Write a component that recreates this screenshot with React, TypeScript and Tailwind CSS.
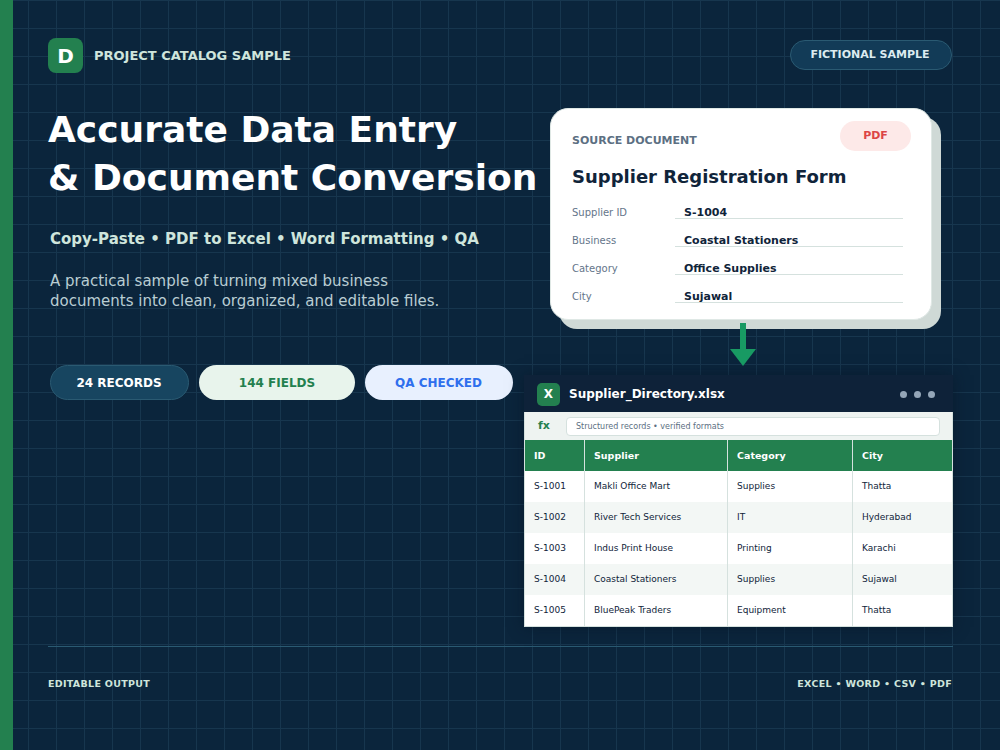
const font = '[font-family:"DejaVu_Sans",sans-serif]'

const stats = [
  { label: '24 RECORDS', className: 'w-[139px] border border-[#2a5a72] bg-[#174560] pr-[1px] text-white' },
  { label: '144 FIELDS', className: 'w-[156px] bg-[#e8f4ec] text-[#23804f]' },
  { label: 'QA CHECKED', className: 'w-[148px] bg-[#e8f0fe] pr-[1px] text-[#2f6fed]' },
]

const fields = [
  ['Supplier ID', 'S-1004'],
  ['Business', 'Coastal Stationers'],
  ['Category', 'Office Supplies'],
  ['City', 'Sujawal'],
]

const rows = [
  ['S-1001', 'Makli Office Mart', 'Supplies', 'Thatta'],
  ['S-1002', 'River Tech Services', 'IT', 'Hyderabad'],
  ['S-1003', 'Indus Print House', 'Printing', 'Karachi'],
  ['S-1004', 'Coastal Stationers', 'Supplies', 'Sujawal'],
  ['S-1005', 'BluePeak Traders', 'Equipment', 'Thatta'],
]

const columns = 'grid grid-cols-[60px_143px_125px_99px]'

function SourceCard() {
  return (
    <div className="ml-[26px] h-[212px] w-[382px] rounded-[18px] border border-[#dfe8e5] bg-white pl-[21px] pr-[20px] pt-[12px] shadow-[9px_9px_0_#cfd9d6]">
      <div className="flex items-start justify-between">
        <p className="pt-[12px] text-[11px] font-bold leading-[16px] text-[#5c6f82]">SOURCE DOCUMENT</p>
        <span className="flex h-[30px] w-[71px] items-center justify-center rounded-full bg-[#fde9e8] text-[11px] font-bold text-[#dc4545]">PDF</span>
      </div>
      <h2 className="mt-[14px] text-[18px] font-bold leading-[24px] text-[#10243a]">Supplier Registration Form</h2>
      <div className="mr-[8px] mt-[2px]">
        {fields.map(([label, value]) => (
          <div key={label} className="grid h-[28px] grid-cols-[103px_1fr] items-end">
            <span className="pb-[1px] text-[10px] leading-[10px] text-[#64758a]">{label}</span>
            <span className="border-b border-[#d5e1de] pl-[9px] text-[11px] font-bold leading-[10px] text-[#10243a]">{value}</span>
          </div>
        ))}
      </div>
    </div>
  )
}

function Sheet() {
  return (
    <div className="w-[429px] shadow-[0_0_14px_rgba(6,22,38,0.6)]">
      <div className="flex h-[37px] items-center justify-between bg-[#0e2239] pl-[13px] pr-[18px] pt-[1px]">
        <div className="flex items-center gap-[9px]">
          <span className="flex h-[23px] w-[23px] items-center justify-center rounded-[5px] bg-[#23804f] text-[12px] font-bold text-white">X</span>
          <span className="text-[12px] font-bold text-white">Supplier_Directory.xlsx</span>
        </div>
        <div className="flex gap-[7px]">
          <span className="h-[7px] w-[7px] rounded-full bg-[#94a6b8]" />
          <span className="h-[7px] w-[7px] rounded-full bg-[#94a6b8]" />
          <span className="h-[7px] w-[7px] rounded-full bg-[#94a6b8]" />
        </div>
      </div>
      <div className="border-x border-b border-[#d5e1de] bg-white">
        <div className="flex h-[28px] items-center bg-[#eef3f1] pl-[13px] pr-[12px] pt-[1px]">
          <span className="w-[28px] text-[11px] font-bold text-[#23804f]">fx</span>
          <span className="flex h-[19px] flex-1 items-center rounded-[4px] border border-[#d5e1de] bg-white pl-[9px] text-[8px] text-[#5c6f82]">
            Structured records • verified formats
          </span>
        </div>
        <div className={`${columns} h-[31px] bg-[#23804f]`}>
          {['ID', 'Supplier', 'Category', 'City'].map((h, i) => (
            <span key={h} className={`flex items-center pl-[9px] pt-[1px] text-[9.5px] font-bold text-white ${i < 3 ? 'border-r border-[#d5e1de]' : ''}`}>{h}</span>
          ))}
        </div>
        {rows.map((row, r) => (
          <div key={row[0]} className={`${columns} h-[31px] ${r % 2 ? 'bg-[#f3f7f5]' : 'bg-white'}`}>
            {row.map((cell, i) => (
              <span key={i} className={`flex items-center pl-[9px] text-[9px] text-[#10243a] ${i < 3 ? 'border-r border-[#d5e1de]' : ''}`}>{cell}</span>
            ))}
          </div>
        ))}
      </div>
    </div>
  )
}

export default function App() {
  return (
    <div className={`${font} flex h-[750px] w-[1000px] overflow-hidden bg-[#0b253c] bg-[linear-gradient(#17364e_1px,transparent_1px),linear-gradient(90deg,#17364e_1px,transparent_1px)] bg-[size:28px_28px]`}>
      <div className="w-[13px] bg-[#23804f]" />
      <div className="w-[940px] pl-[35px]">
        <header className="flex h-[108px] items-start justify-between pt-[38px]">
          <div className="flex items-center gap-[11px]">
            <span className="flex h-[35px] w-[35px] items-center justify-center rounded-[8px] bg-[#23804f] text-[20px] font-bold text-white">D</span>
            <span className="text-[13px] font-bold text-[#cfe5dc]">PROJECT CATALOG SAMPLE</span>
          </div>
          <span className="mr-[1px] mt-[2px] flex h-[30px] w-[162px] items-center justify-center rounded-full border border-[#2a5a72] bg-[#123b57] pr-[2px] text-[11px] font-bold text-[#dcebf0]">FICTIONAL SAMPLE</span>
        </header>
        <div className="flex">
          <div className="w-[476px] shrink-0">
            <h1 className="-mt-[2px] whitespace-nowrap text-[36px] font-bold leading-[48px] text-white">Accurate Data Entry<br />&amp; Document Conversion</h1>
            <p className="ml-[2px] mt-[27px] whitespace-nowrap text-[15px] font-bold leading-[20px] text-[#cfe5dc]">Copy-Paste • PDF to Excel • Word Formatting • QA</p>
            <p className="ml-[2px] mt-[22px] whitespace-nowrap text-[15px] leading-[20px] text-[#b9cdd3]">A practical sample of turning mixed business<br />documents into clean, organized, and editable files.</p>
            <div className="ml-[2px] mt-[54px] flex gap-[10px]">
              {stats.map((s) => (
                <span key={s.label} className={`flex h-[35px] shrink-0 items-center justify-center rounded-full text-[12px] font-bold ${s.className}`}>{s.label}</span>
              ))}
            </div>
          </div>
          <div className="w-[429px] shrink-0">
            <SourceCard />
            <div className="ml-[206px] flex flex-col items-start">
              <svg width="26" height="43" viewBox="0 0 26 43" className="mt-[3px]">
                <rect x="10" y="0" width="6" height="29" fill="#189a63" />
                <polygon points="0,26 26,26 13,43" fill="#189a63" />
              </svg>
            </div>
            <div className="mt-[9px]"><Sheet /></div>
          </div>
        </div>
        <div className="mt-[19px] border-t border-[#2a5a72]">
          <div className="mr-[1px] flex justify-between pt-[30px] text-[9.5px] font-bold tracking-[0.3px] text-[#cfe5dc]">
            <span>EDITABLE OUTPUT</span>
            <span>EXCEL • WORD • CSV • PDF</span>
          </div>
        </div>
      </div>
    </div>
  )
}
